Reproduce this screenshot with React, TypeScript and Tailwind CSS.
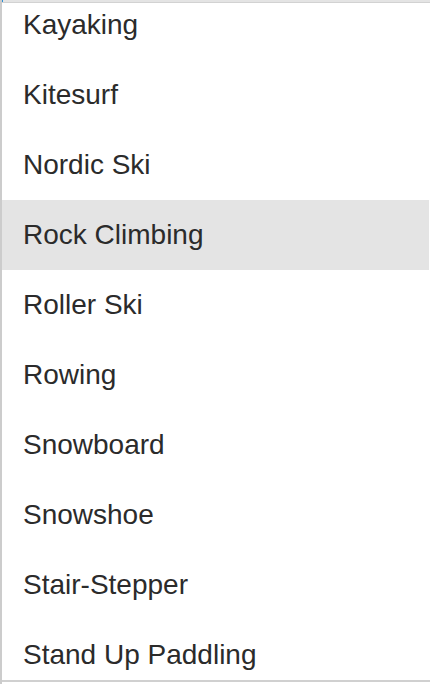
const sports = [
  "Kayaking",
  "Kitesurf",
  "Nordic Ski",
  "Rock Climbing",
  "Roller Ski",
  "Rowing",
  "Snowboard",
  "Snowshoe",
  "Stair-Stepper",
  "Stand Up Paddling",
];

export default function App() {
  return (
    <div className="relative h-[684px] w-[430px] overflow-hidden border-l-2 border-[#cccccc] bg-white font-['Liberation_Sans',Arial,sans-serif]">
      {/* top edge */}
      <div className="absolute left-0 right-0 top-0 z-10 h-[3px] border-b border-[#d2d2d2] bg-[#e4e4e4]" />
      <div className="absolute -left-[2px] top-0 z-20 h-[2px] w-[3px] bg-[#2a8fd6]" />

      {/* scrolled list */}
      <div className="h-[682px] overflow-hidden border-b-2 border-[#d0d0d0]">
        <ul className="-mt-[10px]">
          {sports.map((name) => (
            <li
              key={name}
              className={`flex h-[70px] items-center pl-[21px] text-[28px] text-[#2b2b2b] ${
                name === "Rock Climbing" ? "mr-[1px] bg-[#e4e4e4]" : ""
              }`}
            >
              {name}
            </li>
          ))}
        </ul>
      </div>
    </div>
  );
}
